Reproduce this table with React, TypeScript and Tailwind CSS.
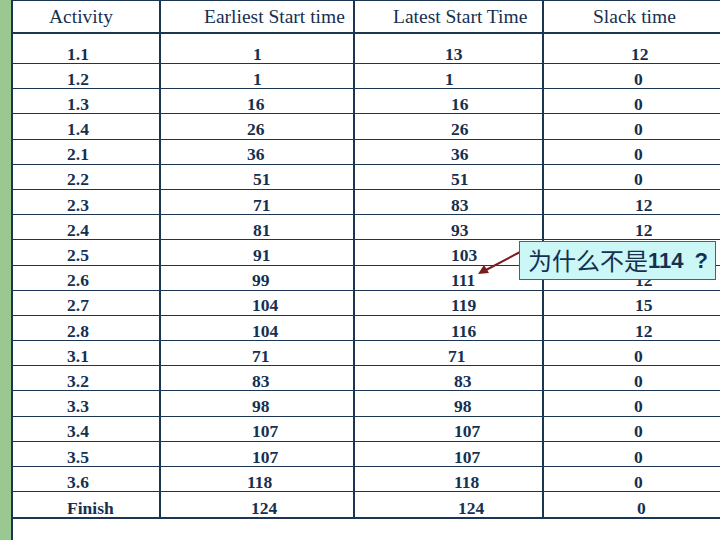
const rows: { a: string; e: string; ep: string; l: string; lp: string; s: string; sp: string }[] = [
  { a: "1.1", e: "1", ep: "pl-[92px]", l: "13", lp: "pl-[90px]", s: "12", sp: "pl-[87px]" },
  { a: "1.2", e: "1", ep: "pl-[92px]", l: "1", lp: "pl-[90px]", s: "0", sp: "pl-[90px]" },
  { a: "1.3", e: "16", ep: "pl-[86px]", l: "16", lp: "pl-[96px]", s: "0", sp: "pl-[90px]" },
  { a: "1.4", e: "26", ep: "pl-[86px]", l: "26", lp: "pl-[96px]", s: "0", sp: "pl-[90px]" },
  { a: "2.1", e: "36", ep: "pl-[86px]", l: "36", lp: "pl-[96px]", s: "0", sp: "pl-[90px]" },
  { a: "2.2", e: "51", ep: "pl-[92px]", l: "51", lp: "pl-[96px]", s: "0", sp: "pl-[90px]" },
  { a: "2.3", e: "71", ep: "pl-[92px]", l: "83", lp: "pl-[96px]", s: "12", sp: "pl-[91px]" },
  { a: "2.4", e: "81", ep: "pl-[92px]", l: "93", lp: "pl-[96px]", s: "12", sp: "pl-[91px]" },
  { a: "2.5", e: "91", ep: "pl-[92px]", l: "103", lp: "pl-[96px]", s: "12", sp: "pl-[91px]" },
  { a: "2.6", e: "99", ep: "pl-[91px]", l: "111", lp: "pl-[96px]", s: "12", sp: "pl-[91px]" },
  { a: "2.7", e: "104", ep: "pl-[91px]", l: "119", lp: "pl-[96px]", s: "15", sp: "pl-[91px]" },
  { a: "2.8", e: "104", ep: "pl-[91px]", l: "116", lp: "pl-[96px]", s: "12", sp: "pl-[91px]" },
  { a: "3.1", e: "71", ep: "pl-[91px]", l: "71", lp: "pl-[93px]", s: "0", sp: "pl-[90px]" },
  { a: "3.2", e: "83", ep: "pl-[91px]", l: "83", lp: "pl-[99px]", s: "0", sp: "pl-[90px]" },
  { a: "3.3", e: "98", ep: "pl-[91px]", l: "98", lp: "pl-[99px]", s: "0", sp: "pl-[90px]" },
  { a: "3.4", e: "107", ep: "pl-[91px]", l: "107", lp: "pl-[99px]", s: "0", sp: "pl-[90px]" },
  { a: "3.5", e: "107", ep: "pl-[91px]", l: "107", lp: "pl-[99px]", s: "0", sp: "pl-[90px]" },
  { a: "3.6", e: "118", ep: "pl-[86px]", l: "118", lp: "pl-[99px]", s: "0", sp: "pl-[90px]" },
  { a: "Finish", e: "124", ep: "pl-[90px]", l: "124", lp: "pl-[103px]", s: "0", sp: "pl-[93px]" },
];

export default function App() {
  return (
    <div className="relative flex w-[720px] h-[540px] bg-white overflow-hidden text-[#16304f] font-['Liberation_Serif',serif]">
      <div className="w-[13px] shrink-0 bg-[#9bc890] border-r-2 border-[#1c3553]" />

      <div className="flex-1 flex flex-col">
        {/* header */}
        <div className="flex h-[34px] border-t border-b-2 border-[#1c3553] text-[19.5px] leading-none">
          <div className="w-[148px] border-r-2 border-[#1c3553] pl-[36px] pt-[6px]">Activity</div>
          <div className="w-[194px] border-r-2 border-[#1c3553] pl-[43px] pt-[6px]">Earliest Start time</div>
          <div className="w-[189px] border-r-2 border-[#1c3553] pl-[38px] pt-[6px]">Latest Start Time</div>
          <div className="flex-1 pl-[49px] pt-[6px]">Slack time</div>
        </div>

        {rows.map((r, i) => (
          <div
            key={r.a}
            className={
              "flex text-[17.5px] font-bold leading-none border-[#1c3553] " +
              (i === 0 ? "h-[30px] border-b" : i === rows.length - 1 ? "h-[27px] border-b-2" : "h-[25.2px] border-b")
            }
          >
            <div className="w-[148px] border-r-2 border-[#1c3553] flex items-end pl-[54px]">{r.a}</div>
            <div className={"w-[194px] border-r-2 border-[#1c3553] flex items-end " + r.ep}>{r.e}</div>
            <div className={"w-[189px] border-r-2 border-[#1c3553] flex items-end " + r.lp}>{r.l}</div>
            <div className={"flex-1 flex items-end " + r.sp}>{r.s}</div>
          </div>
        ))}
      </div>

      {/* callout */}
      <svg className="absolute left-0 top-0" width="720" height="540" viewBox="0 0 720 540">
        <line x1="520" y1="252" x2="486" y2="270" stroke="#7b1c1c" strokeWidth="2" />
        <polygon points="478,274 484,265 489,273" fill="#7b1c1c" />
      </svg>
      <div className="absolute left-[519px] top-[241px] w-[197px] h-[39px] bg-[#ccf7f7] border border-[#8a4a4a] flex items-center pl-[8px] text-[24px] leading-none text-[#16304f] whitespace-nowrap font-['Noto_Sans_CJK_SC',sans-serif]">
        <span className="-translate-y-[1px]">为什么不是</span>
        <span className="font-['Liberation_Sans',sans-serif] font-bold text-[22px]">114</span>
        <span className="font-['Liberation_Sans',sans-serif] font-bold text-[22px] ml-[11px]">?</span>
      </div>
    </div>
  );
}
